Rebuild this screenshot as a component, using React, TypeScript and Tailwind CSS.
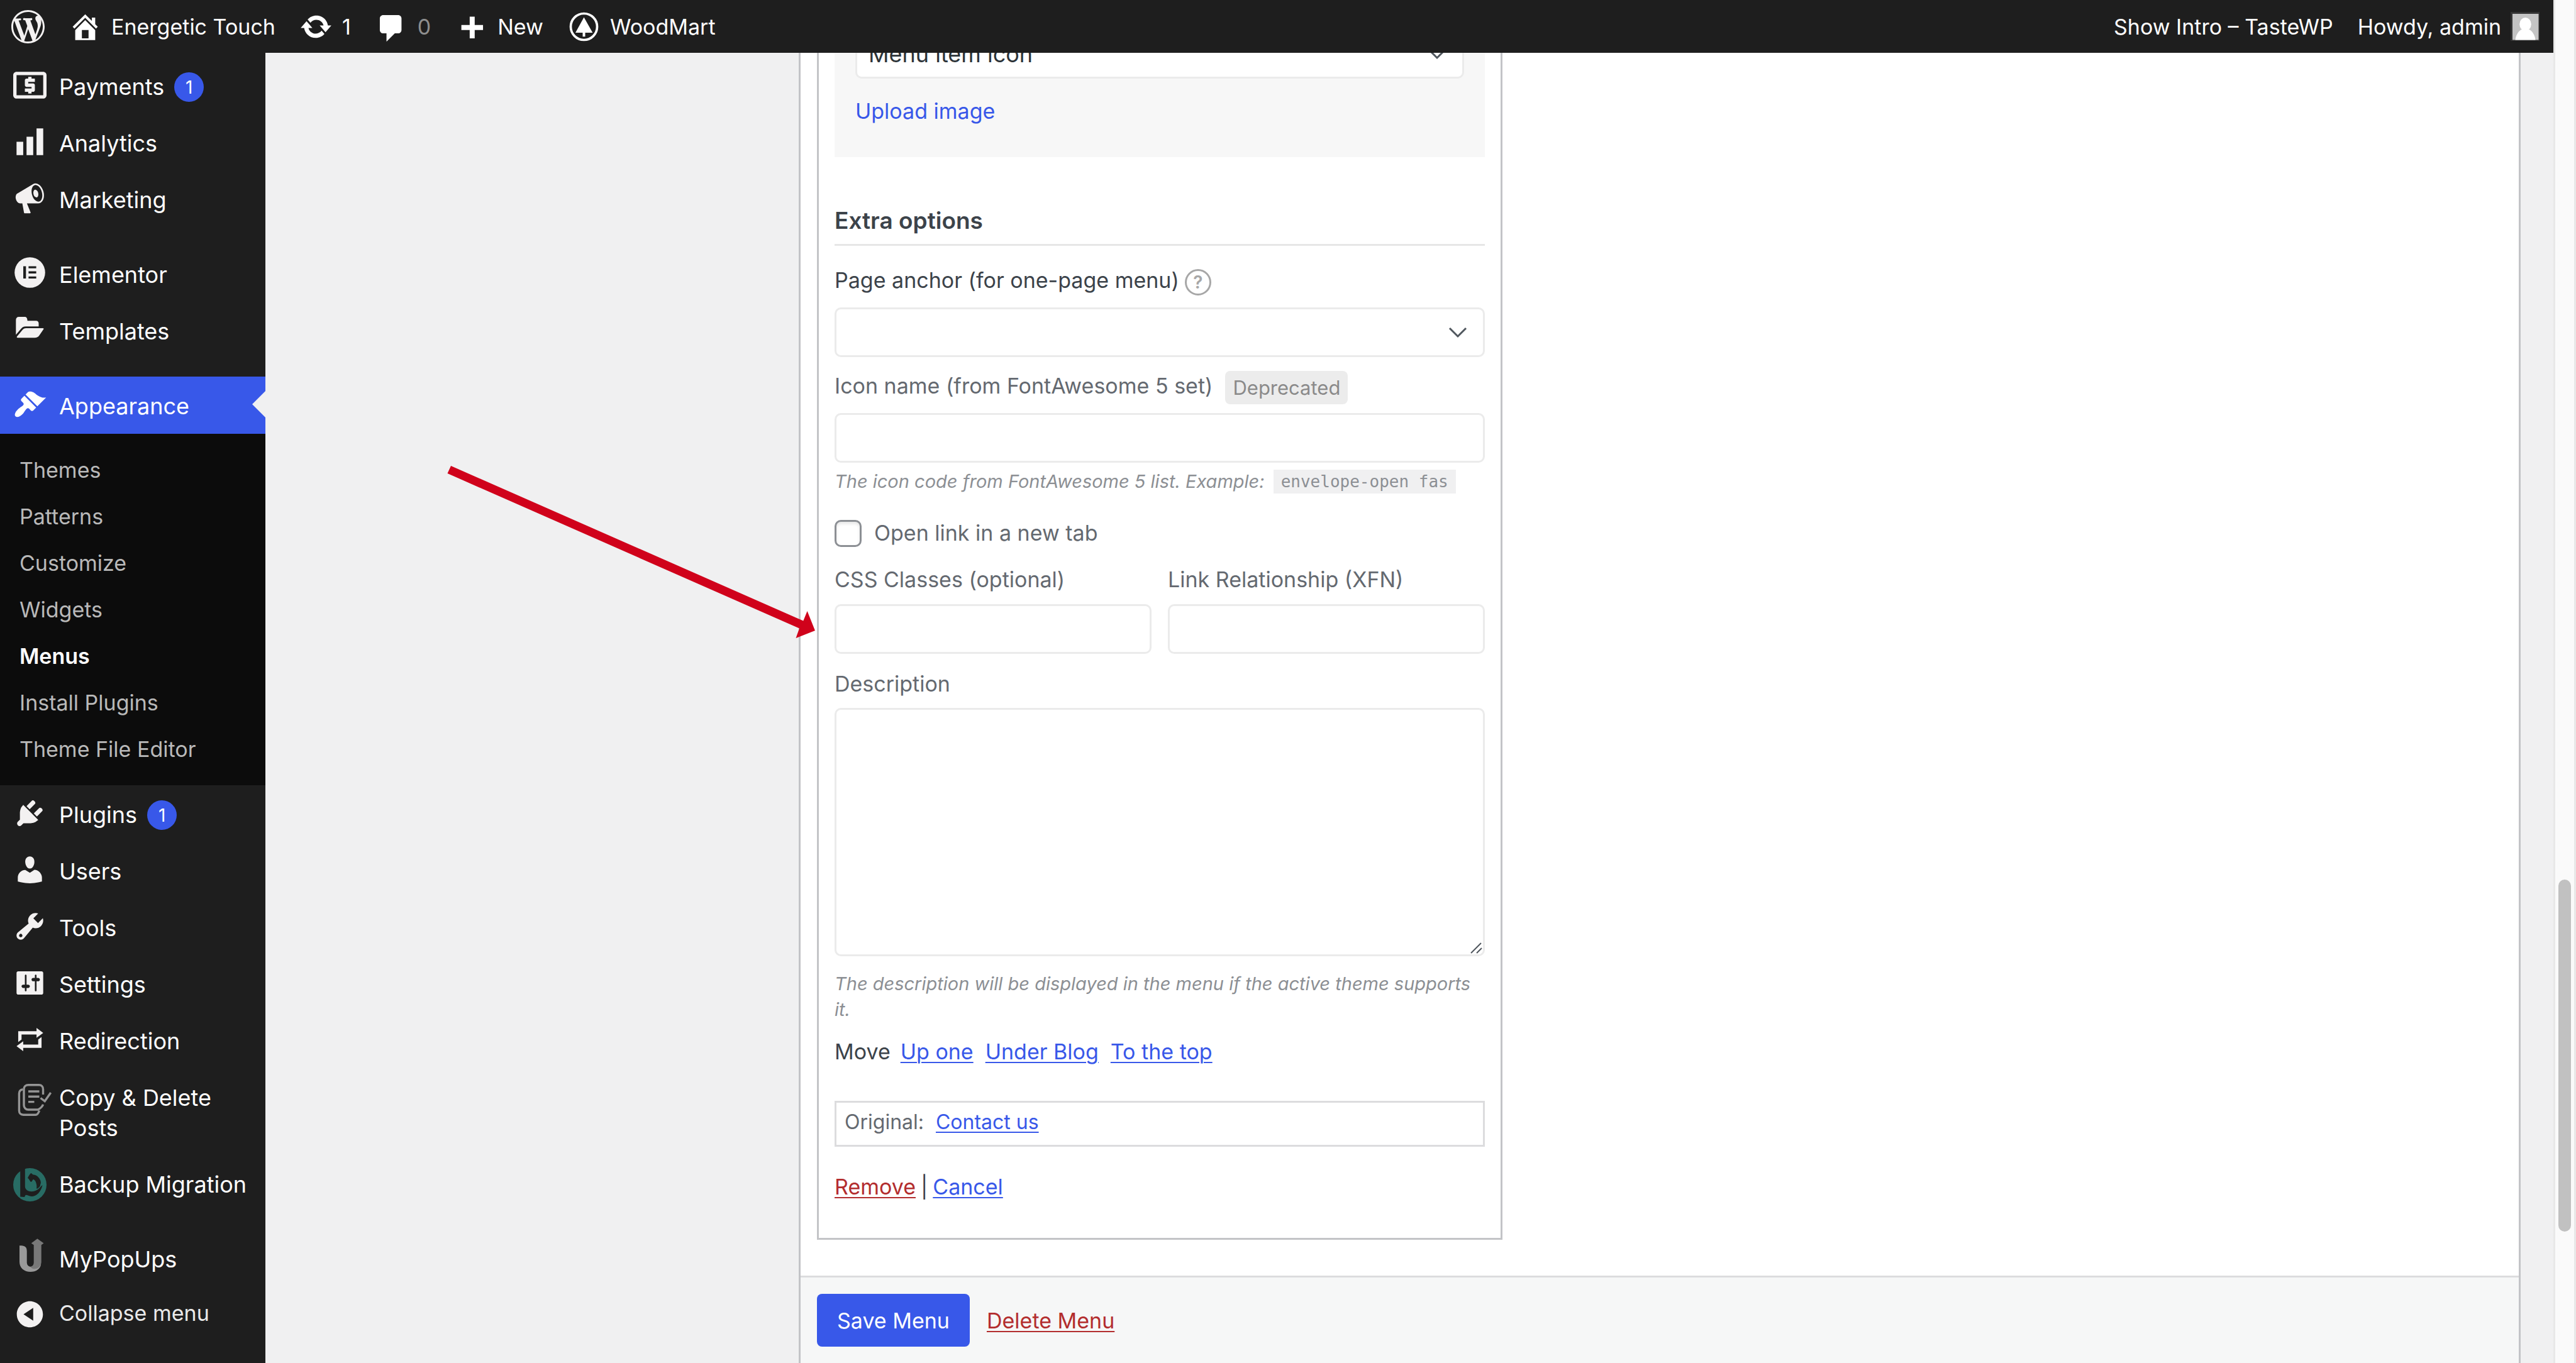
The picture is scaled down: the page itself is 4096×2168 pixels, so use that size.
import type { ReactNode } from "react"
import clsx from "clsx"

const paths = {
  wordpress:
    "M20 10c0-5.51-4.49-10-10-10C4.48 0 0 4.49 0 10c0 5.52 4.48 10 10 10 5.51 0 10-4.48 10-10zM7.78 15.37L4.37 6.22c.55-.02 1.17-.08 1.17-.08.5-.06.44-1.13-.06-1.11 0 0-1.45.11-2.37.11-.18 0-.37 0-.58-.01C4.12 2.69 6.87 1.11 10 1.11c2.33 0 4.45.87 6.05 2.34-.68-.11-1.65.39-1.65 1.58 0 .74.45 1.36.9 2.1.35.61.55 1.36.55 2.46 0 1.49-1.4 5-1.4 5l-3.03-8.37c.54-.02.82-.17.82-.17.5-.05.44-1.25-.06-1.22 0 0-1.44.12-2.38.12-.87 0-2.33-.12-2.33-.12-.5-.03-.56 1.2-.06 1.22l.92.08 1.26 3.41zM17.41 10c.24-.64.74-1.87.43-4.25.7 1.29 1.05 2.71 1.05 4.25 0 3.29-1.73 6.24-4.4 7.78.97-2.59 1.94-5.2 2.92-7.78zM6.1 18.09C3.12 16.65 1.11 13.53 1.11 10c0-1.3.23-2.48.72-3.59C3.25 10.3 4.67 14.2 6.1 18.09zm4.03-6.63l2.58 6.98c-.86.29-1.76.45-2.71.45-.79 0-1.57-.11-2.29-.33.81-2.38 1.62-4.74 2.42-7.1z",
  home: "M16 8.5l1.53 1.53-1.06 1.06L10 4.6l-6.47 6.49-1.06-1.06L10 2.5l4 4v-2h2v4zm-6-2.46l6 5.99V18H4v-5.97zM12 17v-5H8v5h4z",
  update:
    "M10.2 3.28c3.53 0 6.43 2.61 6.92 6h2.08l-3.5 4-3.5-4h2.32c-.45-1.97-2.21-3.45-4.32-3.45-1.45 0-2.73.71-3.54 1.78L4.95 5.66C6.23 4.2 8.11 3.28 10.2 3.28zm-.4 13.44c-3.52 0-6.43-2.61-6.92-6H.8l3.5-4c1.17 1.33 2.33 2.67 3.5 4H5.48c.45 1.97 2.21 3.45 4.32 3.45 1.45 0 2.73-.71 3.54-1.78l1.71 1.95c-1.28 1.46-3.15 2.38-5.25 2.38z",
  comment: "M5 3h9c1.1 0 2 .9 2 2v7c0 1.1-.9 2-2 2h-2l-5 5v-5H5c-1.1 0-2-.9-2-2V5c0-1.1.9-2 2-2z",
  plus: "M17 9v3h-5v5H9v-5H4V9h5V4h3v5h5z",
  payments:
    "M9 15h2v-1h1c.55 0 1-.45 1-1v-3c0-.55-.45-1-1-1H9V8h4V6h-2V5H9v1H8c-.55 0-1 .45-1 1v3c0 .55.45 1 1 1h3v1H7v2h2v1zm9-13H2C.89 2 .01 2.89.01 4L0 16c0 1.11.89 2 2 2h16c1.11 0 2-.89 2-2V4c0-1.11-.89-2-2-2zm0 14H2V4h16v12z",
  chart: "M18 18V2h-4v16h4zm-6 0V7H8v11h4zm-6 0v-8H2v8h4z",
  megaphone:
    "M18.15 5.94c.46 1.62.38 3.22-.02 4.48-.42 1.28-1.26 2.18-2.3 2.48-.16.06-.26.06-.4.06-.06.02-.12.02-.18.02-.06.02-.14.02-.22.02h-6.8l2.22 5.5c.02.14-.06.26-.14.34-.08.1-.24.16-.34.16H6.95c-.1 0-.26-.06-.34-.16-.08-.08-.16-.2-.14-.34l-1-5.5H4.25l-.02-.02c-.5.06-1.08-.18-1.54-.62s-.88-1.08-1.06-1.88c-.24-.8-.2-1.56-.02-2.2.18-.62.58-1.08 1.06-1.3l.02-.02 9-5.4c.1-.06.18-.1.24-.16.06-.04.14-.08.24-.12.16-.08.28-.12.5-.18 1.04-.3 2.24.1 3.22.98s1.84 2.24 2.26 3.86zm-2.58 5.98h-.02c.4-.1.74-.34 1.04-.7.58-.7.86-1.76.86-3.04 0-.64-.1-1.3-.28-1.98-.34-1.36-1.02-2.5-1.78-3.24s-1.68-1.1-2.46-.88c-.82.22-1.4.96-1.7 2-.32 1.04-.28 2.36.06 3.72.38 1.36 1 2.5 1.8 3.24.78.74 1.62 1.1 2.48.88zm-2.54-7.08c.22-.04.42-.02.62.04.38.16.76.48 1.02 1s.42 1.2.42 1.78c0 .3-.04.56-.12.8-.18.48-.44.84-.86.94-.34.1-.8-.06-1.14-.4s-.64-.86-.78-1.5c-.18-.62-.12-1.24.02-1.72s.48-.84.82-.94z",
  appearance:
    "M14.48 11.06L7.41 3.99l1.5-1.5c.5-.56 2.3-.47 3.51.32 1.21.8 1.43 1.28 2.91 2.1 1.18.64 2.45 1.26 4.45.85zm-.71.71L6.7 4.7 4.93 6.47c-.39.39-.39 1.02 0 1.41l1.06 1.06c.39.39.39 1.03 0 1.42-.6.6-1.43 1.11-2.21 1.69-.35.26-.7.53-1.01.84C1.43 14.23.4 16.08 1.4 17.07c.99 1 2.84-.03 4.18-1.36.31-.31.58-.66.85-1.02.57-.78 1.08-1.61 1.69-2.21.39-.39 1.02-.39 1.41 0l1.06 1.06c.39.39 1.02.39 1.41 0z",
  plugins:
    "M13.11 4.36L9.87 7.6 8 5.73l3.24-3.24c.35-.34 1.05-.2 1.56.32.52.51.66 1.21.31 1.55zm-8 1.77l.91-1.12 9.01 9.01-1.19.84c-.71.71-2.63 1.16-3.82 1.16H6.14L4.9 17.26c-.59.59-1.54.59-2.12 0-.59-.58-.59-1.53 0-2.12l1.24-1.24v-3.88c0-1.13.4-3.19 1.09-3.89zm7.26 3.97l3.24-3.24c.34-.35 1.04-.21 1.55.31.52.51.66 1.21.31 1.55l-3.24 3.25z",
  users:
    "M10 9.25c-2.27 0-2.73-3.44-2.73-3.44C7 4.02 7.82 2 9.97 2c2.16 0 2.98 2.02 2.71 3.81 0 0-.41 3.44-2.68 3.44zm0 2.57L12.72 10c2.39 0 4.52 2.33 4.52 4.53v2.49s-3.65 1.13-7.24 1.13c-3.65 0-7.24-1.13-7.24-1.13v-2.49c0-2.25 1.94-4.48 4.47-4.48z",
  tools:
    "M16.68 9.77c-1.34 1.34-3.3 1.67-4.95.99l-5.41 6.52c-.99.99-2.59.99-3.58 0s-.99-2.59 0-3.57l6.52-5.42c-.68-1.65-.35-3.61.99-4.95 1.28-1.28 3.12-1.62 4.72-1.06l-2.89 2.89 2.82 2.82 2.86-2.87c.53 1.58.18 3.39-1.08 4.65zM3.81 16.21c.4.39 1.04.39 1.43 0 .4-.4.4-1.04 0-1.43-.39-.4-1.03-.4-1.43 0-.39.39-.39 1.03 0 1.43z",
  settings:
    "M18 16V4c0-.55-.45-1-1-1H3c-.55 0-1 .45-1 1v12c0 .55.45 1 1 1h14c.55 0 1-.45 1-1zM8 11h1c.55 0 1 .45 1 1s-.45 1-1 1H8v1.5c0 .28-.22.5-.5.5s-.5-.22-.5-.5V13H6c-.55 0-1-.45-1-1s.45-1 1-1h1V5.5c0-.28.22-.5.5-.5s.5.22.5.5V11zm5-2h-1c-.55 0-1-.45-1-1s.45-1 1-1h1V5.5c0-.28.22-.5.5-.5s.5.22.5.5V7h1c.55 0 1 .45 1 1s-.45 1-1 1h-1v5.5c0 .28-.22.5-.5.5s-.5-.22-.5-.5V9z",
  redirection: "M5 7v3l-2 1.5V5h11V3l4 3.01L14 9V7H5zm10 6v-3l2-1.5V15H6v2l-4-3.01L6 11v2h9z",
  collapse: "M10 2.16c4.33 0 7.84 3.51 7.84 7.84s-3.51 7.84-7.84 7.84S2.16 14.33 2.16 10 5.71 2.16 10 2.16zm2 11.72V6.12L6.18 9.97z",
}

function Icon({ name }: { name: keyof typeof paths }) {
  return (
    <svg viewBox="0 0 20 20" fill="currentColor" fillRule="evenodd" aria-hidden="true" className="size-[53px] shrink-0">
      <path d={paths[name]} />
    </svg>
  )
}

function WoodMartIcon() {
  return (
    <svg viewBox="0 0 53 53" aria-hidden="true" className="size-[53px] shrink-0">
      <circle cx="26.5" cy="26.5" r="21" fill="none" stroke="currentColor" strokeWidth="3.7" />
      <path d="M26.5 11.5L40.3 36H28.5v6.3h-4V36H13z" fill="currentColor" />
    </svg>
  )
}

function ElementorIcon() {
  return (
    <svg viewBox="0 0 53 53" aria-hidden="true" className="size-[53px] shrink-0">
      <circle cx="26.5" cy="25.5" r="24.3" fill="currentColor" />
      <path d="M16 15.4h4.3V35H16zM24.4 15.4h12.2v3.3H24.4zM24.4 23.6h12.2v3.3H24.4zM24.4 31.7h12.2V35H24.4z" fill="#1e1e1e" />
    </svg>
  )
}

function TemplatesIcon() {
  return (
    <svg viewBox="0 0 53 53" fill="currentColor" aria-hidden="true" className="size-[53px] shrink-0">
      <path d="M4.3 34.5V11c0-3 1.7-5 4.7-5h9c3.2 0 4.4 1.8 4.6 6.2h13.6c3 0 4.3 1.6 4.3 4.4v4.7H20c-3.7 0-6 1.5-8 4.2z" />
      <path d="M6 37.3l8.300-10c2-2.300 3.300-3.300 6.200-3.300h26.500c1.500 0 2 .7 1 2l-6.500 9.500c-1.800 2.600-4 3.800-7.500 3.800H7.300c-1.500 0-2-.9-1.300-2z" />
    </svg>
  )
}

function CopyPostsIcon() {
  return (
    <svg viewBox="0 0 53 53" fill="none" stroke="#959595" strokeWidth="3.4" aria-hidden="true" className="size-[53px] shrink-0 overflow-visible">
      <g transform="translate(7 6)">
        <path d="M40.5 18V9.500c0-4-2.500-6.800-6.500-6.800H17c-4 0-7 2.800-7 6.800V35c0 4 3 7 7 7h15.300c4-2 7-4.500 8.200-8.200" />
        <path d="M8.5 9.600c-4 .8-6.100 3-6.100 6.800v27.200c0 4 2.500 6.600 6.600 6.600h19.500c3 0 4.500-2 6-6.700" />
        <path d="M17 13h17.500M17 21.300h17.500M17 29.600h9.500M36.500 23.500l6.700 5 9.500-13.500" />
      </g>
    </svg>
  )
}

function BackupIcon() {
  return (
    <svg viewBox="0 0 53 53" aria-hidden="true" className="size-[53px] shrink-0 overflow-visible">
      <g transform="translate(0 3)">
        <circle cx="26.5" cy="26.5" r="26.5" fill="#286c64" />
        <path
          d="M13 0h5.800v29.300c.4 5.500 5 8 10.500 7.900 6.500 0 11.300-3.500 14.600-7.900 1-1.300 2.700-2.300 2.700-2.300C44 38 37 45 29.300 45c-4 0-6.500-2.200-9-2.200-1.800 0-1.300 3.200-2.800 3.200L11.200 45.500V4z"
          fill="#1e1e1e"
        />
        <path
          d="M23 15.800c.5-1 3.500-7 5.400-7.800 1.300.3 2 2 3.600 2.500 2.500.3 4.800 1 6.400 2.500 3 2.500 5.500 6.500 5.500 10 0 2-1.200 3-.9 5-1.300 2.300-3.500 4.300-5.500 5-.8-1.800.3-4.500-.5-7-.8-4.500-2.500-7-5-8.200-1.500 1-1.800 3.500-3.600 4.200-2.300-1.200-2.500-4.500-5.400-6.200z"
          fill="#1e1e1e"
        />
      </g>
    </svg>
  )
}

function MyPopUpsIcon() {
  return (
    <svg viewBox="0 0 53 53" aria-hidden="true" className="size-[53px] shrink-0 overflow-visible">
      <g transform="translate(10 -4)">
        <path d="M0 11.3c8-.3 11.700 1.700 11.700 8.700v17.500c0 4 2 6.700 5.500 7.300l5 3.200 12-7C33 48.500 26.500 53 17.500 53 7.500 53 0 47 0 37z" fill="#999" />
        <path d="M28.4.3l10.100 7.300-3.800 2.600v27c0 6.500-5 11-11 11-3 0-5-1.200-6.500-3.400 3.500-.5 5.500-2.800 5.500-7v-27.600l-4-2.600z" fill="#787878" />
      </g>
    </svg>
  )
}

function Chevron() {
  return (
    <svg
      viewBox="0 0 30 19"
      fill="none"
      stroke="#50575e"
      strokeWidth="3"
      aria-hidden="true"
      className="pointer-events-none absolute top-[31px] right-[28px] h-[19px] w-[30px]"
    >
      <path d="M2 2l13 13L28 2" />
    </svg>
  )
}

const submenu = ["Themes", "Patterns", "Customize", "Widgets", "Menus", "Install Plugins", "Theme File Editor"]

function MenuItem({ icon, label, count }: { icon: ReactNode; label: string; count?: number }) {
  return (
    <li>
      <a href="#" className="flex min-h-[90px] items-start text-[36px] leading-[48px] text-white">
        <span className="flex w-[94px] shrink-0 pt-[18px] pl-[21px] text-[#f3f1f1]">{icon}</span>
        <span className="pt-[23px] pb-[19px]">{label}</span>
        {count && (
          <span className="mt-[24px] ml-[16px] flex size-[47px] items-center justify-center rounded-full bg-[#3858e9] text-[28px]">
            {count}
          </span>
        )}
      </a>
    </li>
  )
}

function Sidebar() {
  return (
    <nav aria-label="Main menu" className="w-[422px] shrink-0 overflow-hidden bg-[#1e1e1e] pt-[7px]">
      <ul>
        <MenuItem icon={<Icon name="payments" />} label="Payments" count={1} />
        <MenuItem icon={<Icon name="chart" />} label="Analytics" />
        <MenuItem icon={<Icon name="megaphone" />} label="Marketing" />
      </ul>
      <ul className="mt-[29px]">
        <MenuItem icon={<ElementorIcon />} label="Elementor" />
        <MenuItem icon={<TemplatesIcon />} label="Templates" />
      </ul>
      <div className="relative mt-[29px] bg-[#3858e9]">
        <a href="#" className="flex h-[91px] items-start text-[36px] leading-[48px] text-white">
          <span className="flex w-[94px] shrink-0 pt-[18px] pl-[21px]">
            <Icon name="appearance" />
          </span>
          <span className="pt-[23px]">Appearance</span>
        </a>
        <svg viewBox="0 0 21 42" aria-hidden="true" className="absolute top-[23px] right-0 h-[42px] w-[21px]">
          <path d="M21 0v42L0 21z" fill="#f0f0f1" />
        </svg>
      </div>
      <ul className="flex h-[559px] flex-col bg-[#0c0c0c] py-[20px] pl-[31px] text-[34px]">
        {submenu.map((item) => (
          <li key={item} className="flex flex-1 items-center">
            <a href="#" className={clsx(item === "Menus" ? "font-semibold text-white" : "text-[#b9b9b9]")}>
              {item}
            </a>
          </li>
        ))}
      </ul>
      <ul>
        <MenuItem icon={<Icon name="plugins" />} label="Plugins" count={1} />
        <MenuItem icon={<Icon name="users" />} label="Users" />
        <MenuItem icon={<Icon name="tools" />} label="Tools" />
        <MenuItem icon={<Icon name="settings" />} label="Settings" />
        <MenuItem icon={<Icon name="redirection" />} label="Redirection" />
        <MenuItem icon={<CopyPostsIcon />} label="Copy & Delete Posts" />
        <MenuItem icon={<BackupIcon />} label="Backup Migration" />
      </ul>
      <ul className="mt-[29px]">
        <MenuItem icon={<MyPopUpsIcon />} label="MyPopUps" />
      </ul>
      <button type="button" className="flex h-[90px] w-full items-start text-left text-[34px] leading-[48px] text-[#e9e9e9]">
        <span className="flex w-[94px] shrink-0 pt-[18px] pl-[21px] text-[#f3f1f1]">
          <Icon name="collapse" />
        </span>
        <span className="pt-[19px]">Collapse menu</span>
      </button>
    </nav>
  )
}

function AdminBar() {
  return (
    <header className="flex h-[84px] shrink-0 items-center justify-between bg-[#1e1e1e] pr-[22px] pl-[18px] text-[34px] text-white">
      <div className="flex items-center gap-[38px]">
        <a href="#" aria-label="About WordPress" className="text-[#f3f1f1]">
          <Icon name="wordpress" />
        </a>
        <a href="#" className="flex items-center gap-[15px]">
          <Icon name="home" />
          Energetic Touch
        </a>
        <a href="#" className="flex items-center gap-[15px]">
          <Icon name="update" />1
        </a>
        <a href="#" className="flex items-center gap-[15px]">
          <Icon name="comment" />
          <span className="text-[#8e8e8e]">0</span>
        </a>
        <a href="#" className="flex items-center gap-[15px]">
          <Icon name="plus" />
          New
        </a>
        <a href="#" className="flex items-center gap-[15px]">
          <WoodMartIcon />
          WoodMart
        </a>
      </div>
      <div className="flex items-center gap-[39px]">
        <a href="#">Show Intro – TasteWP</a>
        <a href="#" className="flex items-center gap-[15px]">
          Howdy, admin
          <svg viewBox="0 0 46 46" aria-hidden="true" className="size-[46px]">
            <path d="M0 0h46v46H0z" fill="#333" />
            <path d="M3 3h41.5v41.5H3z" fill="#c4c4c4" />
            <ellipse cx="23.5" cy="19.5" rx="9.3" ry="10.5" fill="#fff" />
            <path d="M7.5 44.5c1-8 5-14.500 11-17h10c6 2.500 10 9 11 17z" fill="#fff" />
          </svg>
        </a>
      </div>
    </header>
  )
}

const field = "block w-full rounded-[10px] border-[3px] border-[#ebebeb] bg-white px-[18px] outline-none"
const link = "text-[#3858e9] underline decoration-2 underline-offset-[4px]"
const danger = "text-[#b32d2e] underline decoration-2 underline-offset-[4px]"

function MenuItemSettings() {
  return (
    <div className="w-[1090px] border-x-[3px] border-b-[3px] border-[#c3c4c7] px-[25px] pb-[57px] text-[34px] leading-[48px] text-[#646970]">
      <div className="bg-[#f7f7f7] px-[33px] pb-[49px]">
        {/* top of this select is scrolled under the admin bar */}
        <div className="relative -mt-[38px]">
          <select aria-label="Image type" className={clsx(field, "h-[79px] appearance-none text-[36px] text-[#2c3338]")}>
            <option>Menu item icon</option>
          </select>
          <Chevron />
        </div>
        <a href="#" className="mt-[28px] block text-[#3858e9]">
          Upload image
        </a>
      </div>

      <h3 className="mt-[77px] border-b-[3px] border-[#e6e6e6] pb-[13px] text-[37px] font-semibold text-[#3c434a]">
        Extra options
      </h3>

      <div className="mt-[31px] flex items-end gap-[9px] text-[#3c434a]">
        <label htmlFor="page-anchor">Page anchor (for one-page menu)</label>
        <button
          type="button"
          aria-label="Help"
          className="flex size-[42px] items-center justify-center rounded-full border-[3px] border-[#a7a7a7] text-[28px] leading-[36px] font-semibold text-[#a7a7a7]"
        >
          ?
        </button>
      </div>
      <div className="relative mt-[19px]">
        <select id="page-anchor" className={clsx(field, "h-[79px] appearance-none text-[36px]")} />
        <Chevron />
      </div>

      <div className="mt-[22px] flex items-start gap-[20px]">
        <label htmlFor="icon-name">Icon name (from FontAwesome 5 set)</label>
        <span className="rounded-[8px] bg-[#ececec] px-[12px] text-[31px] leading-[53px] text-[#8a8a8a]">Deprecated</span>
      </div>
      <input id="icon-name" type="text" className={clsx(field, "mt-[14px] h-[79px]")} />
      <p className="mt-[11px] flex items-center gap-[14px] text-[29px] leading-[38px] text-[#8c8f94]">
        <em>The icon code from FontAwesome 5 list. Example:</em>
        <code className="bg-[#f0f0f1] px-[12px] font-['DejaVu_Sans_Mono',monospace] text-[26px]">envelope-open fas</code>
      </p>

      <label className="mt-[40px] flex h-[46px] items-center gap-[20px]">
        <input
          type="checkbox"
          className="size-[43px] appearance-none rounded-[10px] border-[3px] border-[#8c8f94] bg-white shadow-[inset_0_3px_5px_rgba(0,0,0,0.1)]"
        />
        Open link in a new tab
      </label>

      <div className="mt-[27px] grid grid-cols-2 gap-[26px]">
        <div>
          <label htmlFor="css-classes">CSS Classes (optional)</label>
          <input id="css-classes" type="text" className={clsx(field, "mt-[15px] h-[79px]")} />
        </div>
        <div>
          <label htmlFor="xfn">Link Relationship (XFN)</label>
          <input id="xfn" type="text" className={clsx(field, "mt-[15px] h-[79px]")} />
        </div>
      </div>

      <label htmlFor="description" className="mt-[24px] block">
        Description
      </label>
      <div className="relative mt-[14px]">
        <textarea id="description" className={clsx(field, "h-[395px] resize-none")} />
        <svg
          viewBox="0 0 20 20"
          stroke="#50575e"
          strokeWidth="2"
          aria-hidden="true"
          className="absolute right-[3px] bottom-[3px] size-[20px]"
        >
          <path d="M1 18L17 2M10 18l8-8" />
        </svg>
      </div>
      <p className="mt-[23px] text-[29px] leading-[41px] text-[#8c8f94] italic">
        The description will be displayed in the menu if the active theme supports it.
      </p>

      <div className="mt-[23px] flex text-[#3c434a]">
        <span className="mr-[16px]">Move</span>
        <span className="flex gap-[19px]">
          <a href="#" className={link}>
            Up one
          </a>
          <a href="#" className={link}>
            Under Blog
          </a>
          <a href="#" className={link}>
            To the top
          </a>
        </span>
      </div>

      <p className="mt-[54px] flex gap-[19px] border-[3px] border-[#dcdcde] pt-[7px] pb-[12px] pl-[13px] text-[32px]">
        <span>Original:</span>
        <a href="#" className={link}>
          Contact us
        </a>
      </p>

      <div className="mt-[40px] flex gap-[8px] text-[#3c434a]">
        <a href="#" className={danger}>
          Remove
        </a>
        <span>|</span>
        <a href="#" className={link}>
          Cancel
        </a>
      </div>
    </div>
  )
}

export default function App() {
  return (
    <div className="flex h-screen overflow-hidden bg-[#f0f0f1] font-['Inter',sans-serif]">
      <div className="flex min-w-0 flex-1 flex-col">
        <AdminBar />
        <div className="flex min-h-0 flex-1">
          <Sidebar />
          <main className="relative flex min-w-0 flex-1 pr-[52px] pl-[848px]">
            <form className="flex min-w-0 flex-1 flex-col overflow-hidden border-x-[3px] border-[#c3c4c7] bg-white">
              <div className="flex-1 pb-[57px] pl-[26px]">
                <MenuItemSettings />
              </div>
              <footer className="flex items-center gap-[27px] border-t-[3px] border-[#dcdcde] bg-[#f6f7f7] py-[26px] pl-[26px] text-[34px]">
                <button type="button" className="h-[84px] rounded-[8px] bg-[#3858e9] px-[32px] text-white">
                  Save Menu
                </button>
                <a href="#" className={danger}>
                  Delete Menu
                </a>
              </footer>
            </form>
            <svg viewBox="0 0 585 276" aria-hidden="true" className="absolute top-[656px] left-[289px] h-[276px] w-[585px]">
              <path d="M6 1l560.3 246.5 6.3-15.5L585 263l-30.5 12 5.5-15.5L.5 13z" fill="#d0021b" />
            </svg>
          </main>
        </div>
      </div>
      {/* scrollbar */}
      <div className="flex w-[36px] shrink-0 flex-col items-center border-x-[3px] border-[#e8e8e8] bg-[#fafafa]">
        <div className="flex-[1399]" />
        <div className="w-[20px] flex-[560] rounded-full bg-[#c1c1c1]" />
        <div className="flex-[209]" />
      </div>
    </div>
  )
}
